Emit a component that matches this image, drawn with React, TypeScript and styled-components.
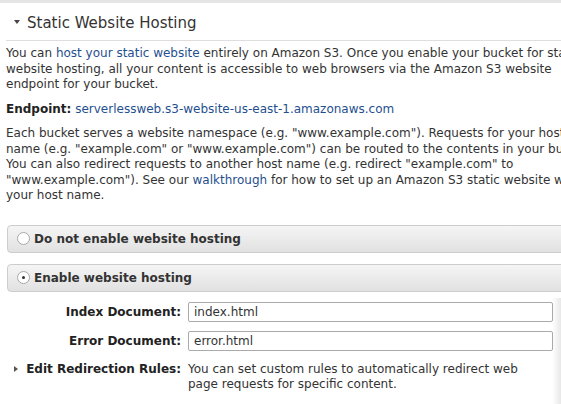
import * as React from 'react'
import styled, { createGlobalStyle } from 'styled-components'

const GlobalStyle = createGlobalStyle`
  html, body {
    margin: 0;
    padding: 0;
    background: #fff;
    overflow: hidden;
  }

  body {
    font-family: "DejaVu Sans", Verdana, sans-serif;
    font-size: 12px;
    color: #333;
  }
`

const Page = styled.div`
  position: relative;
  width: 561px;
  height: 404px;
  overflow: hidden;
`

const Panel = styled.div`
  width: 620px;
`

const TopBar = styled.div`
  height: 3px;
  background: #e5e5e5;
`

const Header = styled.div`
  display: flex;
  align-items: center;
  gap: 7px;
  height: 37px;
  margin-left: 6px;
  padding-left: 8px;
  border-bottom: 1px solid #dedede;
`

const Caret = styled.span<{ $open?: boolean }>`
  display: inline-block;
  width: 0;
  height: 0;
  ${(p) =>
    p.$open
      ? `border-left: 3.5px solid transparent;
         border-right: 3.5px solid transparent;
         border-top: 4px solid #444;`
      : `border-top: 3.5px solid transparent;
         border-bottom: 3.5px solid transparent;
         border-left: 4px solid #555;`}
`

const Title = styled.h2`
  margin: 2px 0 0;
  font-size: 15px;
  font-weight: normal;
  color: #333;
`

const Content = styled.div`
  padding: 5px 0 0 6px;
`

const Paragraph = styled.p`
  margin: 0 0 9px;
  line-height: 15.5px;
  white-space: nowrap;
`

const Link = styled.a`
  color: #1f4f8f;
  text-decoration: none;
`

const Strong = styled.b`
  font-weight: bold;
  color: #222;
`

const Options = styled.div`
  display: flex;
  flex-direction: column;
  gap: 11px;
  margin: 21px 0 0 1px;
`

const Option = styled.label`
  display: flex;
  align-items: center;
  gap: 4px;
  height: 26px;
  padding-left: 9px;
  border: 1px solid #cdcdcd;
  border-radius: 4px;
  background: linear-gradient(#f5f5f5, #e1e1e1);
  font-weight: bold;
  color: #333;
`

const Radio = styled.span<{ $checked?: boolean }>`
  position: relative;
  width: 13px;
  height: 13px;
  box-sizing: border-box;
  border: 1px solid #a9a9a9;
  border-radius: 50%;
  background: #fff;

  ${(p) =>
    p.$checked &&
    `&::after {
      content: '';
      position: absolute;
      left: 4px;
      top: 4px;
      width: 3px;
      height: 3px;
      border-radius: 50%;
      background: #333;
    }`}
`

const Fields = styled.div`
  display: grid;
  grid-template-columns: 175px 365px;
  column-gap: 7px;
  row-gap: 9px;
  align-items: center;
  margin-top: 10px;
`

const FieldLabel = styled.div`
  display: flex;
  align-items: center;
  padding-left: 8px;
  font-weight: bold;
  color: #222;
  white-space: nowrap;
`

const LabelText = styled.span`
  margin-left: auto;
`

const TextInput = styled.input`
  box-sizing: border-box;
  width: 365px;
  height: 20px;
  padding: 0 5px;
  border: 1px solid #aaa;
  border-radius: 2px;
  font-family: "DejaVu Sans", Verdana, sans-serif;
  font-size: 12px;
  color: #333;
  outline: none;
`

const RedirectLabel = styled(FieldLabel)`
  align-self: start;
  line-height: 15.5px;
  margin-top: 2px;
`

const RedirectCaretBox = styled.span`
  display: flex;
  align-items: center;
  height: 15.5px;
`

const RedirectText = styled.div`
  align-self: start;
  margin-top: 2px;
  line-height: 15.5px;
  white-space: nowrap;
`

const EdgeShadow = styled.div`
  position: absolute;
  top: 298px;
  right: 0;
  bottom: 0;
  width: 9px;
  background: linear-gradient(to right, rgba(0, 0, 0, 0), rgba(0, 0, 0, 0.09));
`

export default function App() {
  return (
    <Page>
      <GlobalStyle />
      <Panel>
        <TopBar />
        <Header>
          <Caret $open />
          <Title>Static Website Hosting</Title>
        </Header>
        <Content>
          <Paragraph>
            You can <Link href="#">host your static website</Link> entirely on Amazon S3. Once you enable your bucket for static
            <br />
            website hosting, all your content is accessible to web browsers via the Amazon S3 website
            <br />
            endpoint for your bucket.
          </Paragraph>
          <Paragraph>
            <Strong>Endpoint:</Strong> <Link href="#">serverlessweb.s3-website-us-east-1.amazonaws.com</Link>
          </Paragraph>
          <Paragraph>
            Each bucket serves a website namespace (e.g. "www.example.com"). Requests for your host
            <br />
            name (e.g. "example.com" or "www.example.com") can be routed to the contents in your bucket.
            <br />
            You can also redirect requests to another host name (e.g. redirect "example.com" to
            <br />
            "www.example.com"). See our <Link href="#">walkthrough</Link> for how to set up an Amazon S3 static website with
            <br />
            your host name.
          </Paragraph>

          <Options>
            <Option>
              <Radio />
              Do not enable website hosting
            </Option>
            <Option>
              <Radio $checked />
              Enable website hosting
            </Option>
          </Options>

          <Fields>
            <FieldLabel>
              <LabelText>Index Document:</LabelText>
            </FieldLabel>
            <TextInput defaultValue="index.html" />
            <FieldLabel>
              <LabelText>Error Document:</LabelText>
            </FieldLabel>
            <TextInput defaultValue="error.html" />
            <RedirectLabel>
              <RedirectCaretBox>
                <Caret />
              </RedirectCaretBox>
              <LabelText>Edit Redirection Rules:</LabelText>
            </RedirectLabel>
            <RedirectText>
              You can set custom rules to automatically redirect web
              <br />
              page requests for specific content.
            </RedirectText>
          </Fields>
        </Content>
      </Panel>
      <EdgeShadow />
    </Page>
  )
}
